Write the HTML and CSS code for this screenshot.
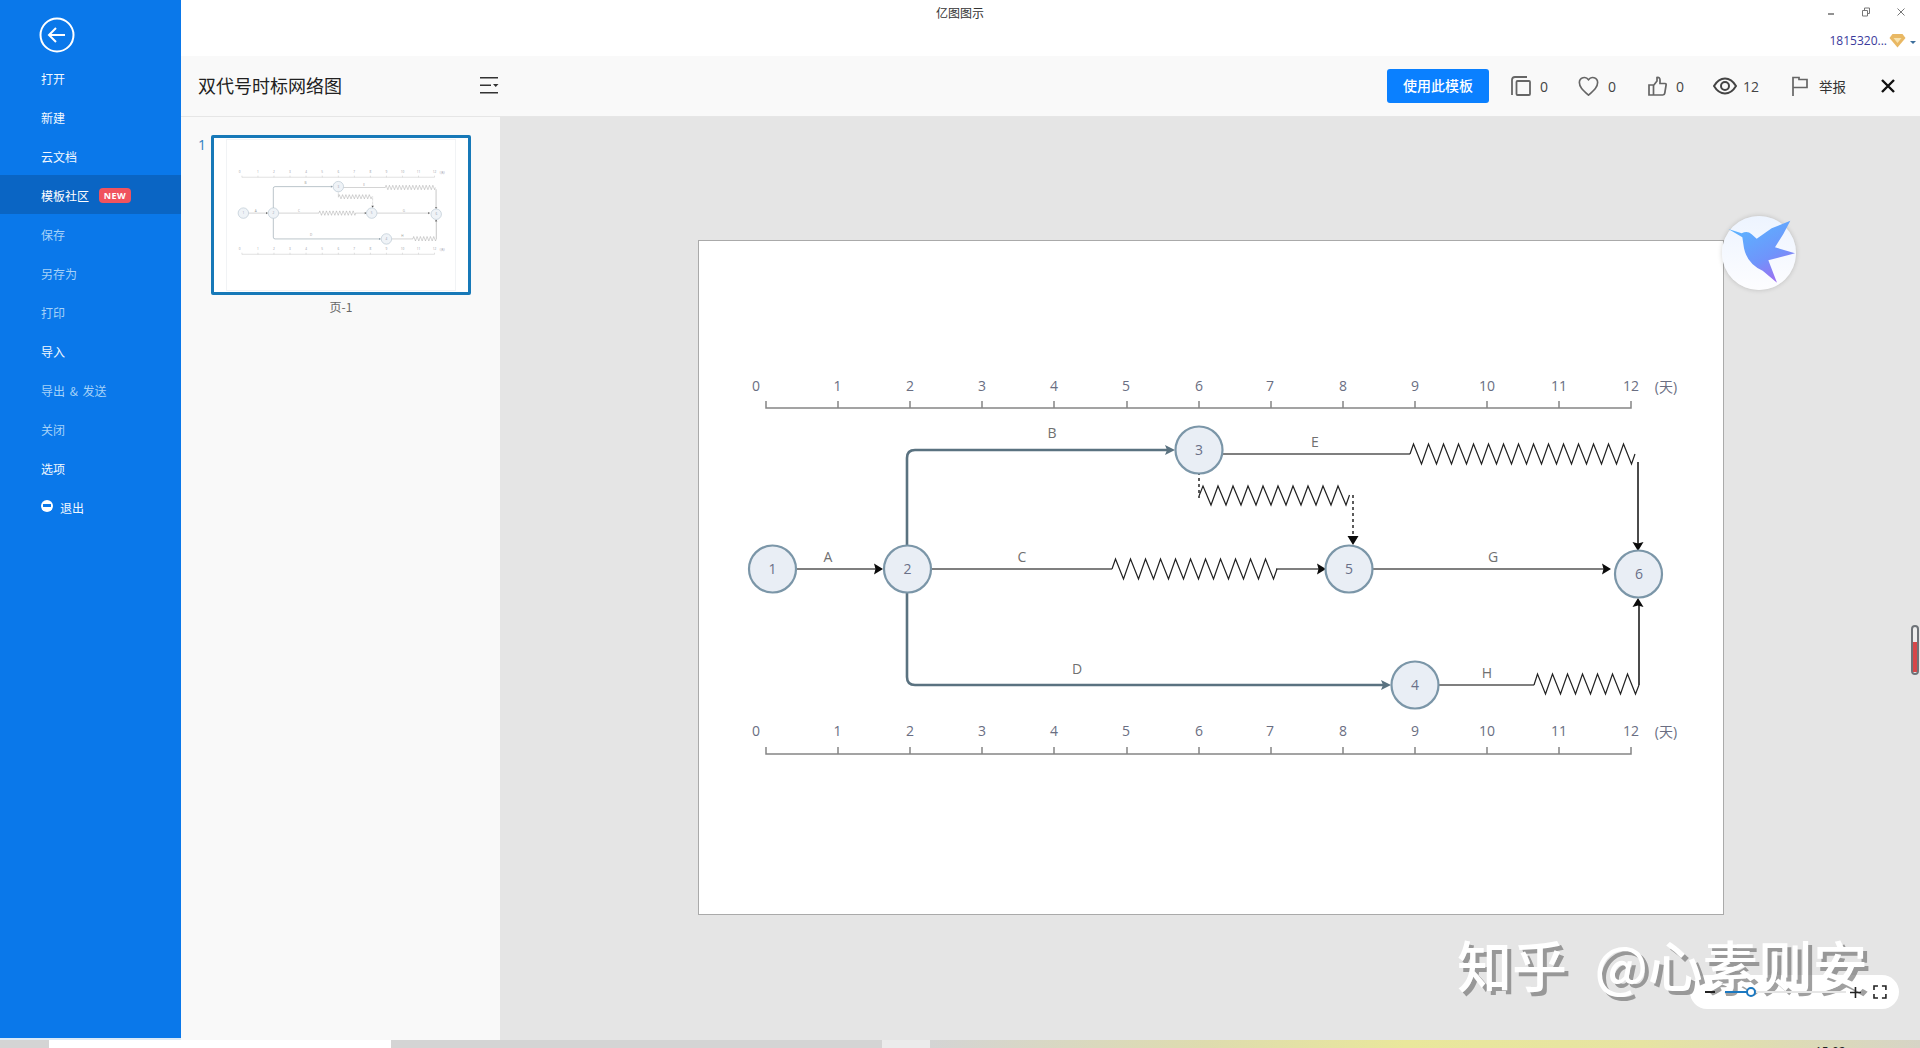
FILE: index.html
```html
<!DOCTYPE html>
<html lang="zh-CN">
<head>
    <meta charset="UTF-8">
    <title>亿图图示</title>
    <link rel="stylesheet" href="styles.css">
</head>
<body>
    <div class="app">
        <div class="main">
            <nav class="sidebar">
                <div class="back">
                    <svg width="36" height="36" viewBox="0 0 36 36" fill="none" stroke="#fff" stroke-width="2">
                        <circle cx="18" cy="18" r="16.5"/>
                        <path d="M26 18H10M17 11l-7 7 7 7"/>
                    </svg>
                </div>
                <a class="menu-item">打开</a>
                <a class="menu-item">新建</a>
                <a class="menu-item">云文档</a>
                <a class="menu-item active">模板社区<span class="badge">NEW</span></a>
                <a class="menu-item muted">保存</a>
                <a class="menu-item muted">另存为</a>
                <a class="menu-item muted">打印</a>
                <a class="menu-item">导入</a>
                <a class="menu-item muted">导出 &amp; 发送</a>
                <a class="menu-item muted">关闭</a>
                <a class="menu-item">选项</a>
                <a class="menu-item"><span class="exit-icon"></span>退出</a>
            </nav>

            <div class="content">
                <header class="titlebar">
                    <div class="app-title">亿图图示</div>
                    <div class="window-box">
                        <div class="window-controls">
                            <svg width="10" height="10" viewBox="0 0 10 10" stroke="#777" fill="none" stroke-width="1.6"><path d="M2 7h6"/></svg>
                            <svg width="10" height="10" viewBox="0 0 10 10" stroke="#777" fill="none"><path d="M1.5 3.5h5v5.5h-5zM3.5 3.5V1h5v5.5H6.500"/></svg>
                            <svg width="10" height="10" viewBox="0 0 10 10" stroke="#777" fill="none"><path d="M1.500 1.500l7 7M8.500 1.500l-7 7"/></svg>
                        </div>
                        <div class="user">
                            <span class="user-name">1815320...</span>
                            <svg width="17" height="15" viewBox="0 0 17 15">
                                <path d="M3.500 1h10l3 4-8 9.500L.5 5z" fill="#e9b863"/>
                                <path d="M4.500 5h8l-4 5z" fill="#f8e2ad"/>
                            </svg>
                            <span class="caret"></span>
                        </div>
                    </div>
                </header>

                <div class="toolbar">
                    <div class="doc-title">双代号时标网络图</div>
                    <svg class="list-icon" width="19" height="17" viewBox="0 0 19 17" fill="#333">
                        <path d="M0 0h18v1.600H0zM0 7.500h11v1.600H0zM0 15h18v1.600H0zM13 7h5.500l-2.750 3z"/>
                    </svg>
                    <div class="actions">
                        <button class="use-btn">使用此模板</button>
                        <div class="stat stat-copy">
                            <svg width="20" height="20" viewBox="0 0 20 20" fill="none" stroke="#666" stroke-width="1.800">
                                <path d="M1 19V4q0-3 3-3h12"/>
                                <rect x="5.500" y="5" width="13.500" height="14" rx="1"/>
                            </svg>
                            <span>0</span>
                        </div>
                        <div class="stat stat-heart">
                            <svg width="21" height="20" viewBox="0 0 24 23" fill="none" stroke="#666" stroke-width="1.900">
                                <path d="M12 22C5 16 1.500 12.500 1.500 7.500a5.800 5.800 0 0 1 10.500-3.300A5.800 5.800 0 0 1 22.500 7.500c0 5-3.500 8.500-10.500 14.500z"/>
                            </svg>
                            <span>0</span>
                        </div>
                        <div class="stat stat-thumb">
                            <svg width="19" height="20" viewBox="0 0 19 20" fill="none" stroke="#666" stroke-width="1.700">
                                <path d="M5.500 9v10H1V9zM5.500 9.500 9 5V1.500q3-.5 3 2.500v3.500h5q1.500 0 1 2l-1.200 7.500q-.3 2-2 2H5.500"/>
                            </svg>
                            <span>0</span>
                        </div>
                        <div class="stat stat-eye">
                            <svg width="24" height="18" viewBox="0 0 24 18" fill="none" stroke="#444" stroke-width="2">
                                <path d="M1 9C4 4 8 1.500 12 1.500S20 4 23 9c-3 5-7 7.500-11 7.500S4 14 1 9z"/>
                                <circle cx="12" cy="9" r="4"/>
                            </svg>
                            <span>12</span>
                        </div>
                        <div class="stat stat-flag">
                            <svg width="16" height="20" viewBox="0 0 16 20" fill="none" stroke="#666" stroke-width="1.700">
                                <path d="M1 20V1.500h6v2h8v8H1"/>
                            </svg>
                            <span class="stat-cn">举报</span>
                        </div>
                        <svg class="close-icon" width="14" height="14" viewBox="0 0 14 14" stroke="#111" stroke-width="2.400" fill="none">
                            <path d="M1 1l12 12M13 1 1 13"/>
                        </svg>
                    </div>
                </div>

                <div class="workspace">
                    <aside class="pages">
                        <div class="page-row">
                            <span class="page-num">1</span>
                            <div class="page-thumb">
                                <svg class="thumb-svg" viewBox="699 241 1024 673">
                                    <use href="#diagram"/>
                                </svg>
                            </div>
                        </div>
                        <div class="page-label">页-1</div>
                    </aside>

                    <section class="stage">
                        <div class="sheet">
                            <svg class="diagram" viewBox="699 241 1024 673">
                                <g id="diagram">
                                    <!-- time scales -->
                                    <path class="scale" d="M766 401V408H1631V401M838 401V408M910 401V408M982 401V408M1054 401V408M1127 401V408M1199 401V408M1271 401V408M1343 401V408M1415 401V408M1487 401V408M1559 401V408"/>
                                    <path class="scale" d="M766 747V754H1631V747M838 747V754M910 747V754M982 747V754M1054 747V754M1127 747V754M1199 747V754M1271 747V754M1343 747V754M1415 747V754M1487 747V754M1559 747V754"/>
                                    <g class="tick-text">
                                        <text x="756" y="391">0</text><text x="837.500" y="391">1</text><text x="910" y="391">2</text><text x="982" y="391">3</text><text x="1054" y="391">4</text><text x="1126" y="391">5</text><text x="1199" y="391">6</text><text x="1270" y="391">7</text><text x="1343" y="391">8</text><text x="1415" y="391">9</text><text x="1487" y="391">10</text><text x="1559" y="391">11</text><text x="1631" y="391">12</text><text x="1666" y="392">(天)</text>
                                        <text x="756" y="736">0</text><text x="837.500" y="736">1</text><text x="910" y="736">2</text><text x="982" y="736">3</text><text x="1054" y="736">4</text><text x="1126" y="736">5</text><text x="1199" y="736">6</text><text x="1270" y="736">7</text><text x="1343" y="736">8</text><text x="1415" y="736">9</text><text x="1487" y="736">10</text><text x="1559" y="736">11</text><text x="1631" y="736">12</text><text x="1666" y="737">(天)</text>
                                    </g>

                                    <!-- critical path edges -->
                                    <path class="edge-bold" d="M907 546V458Q907 450 915 450H1170"/>
                                    <path class="edge-bold" d="M907 592V677Q907 685 915 685H1386"/>
                                    <path class="head-slate" d="M1175 450l-10-5 2 5-2 5zM1391 685l-10-5 2 5-2 5z"/>

                                    <!-- plain edges -->
                                    <path class="edge" d="M796 569H878M931 569H1112M1276 569H1320M1373 569H1606M1222 454H1410M1439 685H1534"/>
                                    <path class="edge-dark" d="M1638 462V546M1639 685V603"/>
                                    <path class="edge-dash" d="M1199 472V498M1353 495V538"/>

                                    <!-- free float -->
                                    <polyline class="zig" points="1112,569 1115.500,559 1123.500,579 1130.500,559 1138.500,579 1145.500,559 1153.500,579 1160.500,559 1168.500,579 1175.500,559 1183.500,579 1190.500,559 1198.500,579 1205.500,559 1213.500,579 1220.500,559 1228.500,579 1235.500,559 1243.500,579 1250.500,559 1258.500,579 1265.500,559 1273.500,579 1277,569"/>
                                    <polyline class="zig" points="1410,454 1413.500,444 1421.500,464 1428.500,444 1436.500,464 1443.500,444 1451.500,464 1458.500,444 1466.500,464 1473.500,444 1481.500,464 1488.500,444 1496.500,464 1503.500,444 1511.500,464 1518.500,444 1526.500,464 1533.500,444 1541.500,464 1548.500,444 1556.500,464 1563.500,444 1571.500,464 1578.500,444 1586.500,464 1593.500,444 1601.500,464 1608.500,444 1616.500,464 1623.500,444 1631.500,464 1635,454"/>
                                    <polyline class="zig" points="1199,496 1203,486 1211,505 1218,486 1226,505 1233,486 1241,505 1248,486 1256,505 1263,486 1271,505 1278,486 1286,505 1293,486 1301,505 1308,486 1316,505 1323,486 1331,505 1338,486 1346,505 1349.500,495"/>
                                    <polyline class="zig" points="1534,685 1537.500,674 1545.500,694 1552.500,674 1560.500,694 1567.500,674 1575.500,694 1582.500,674 1590.500,694 1597.500,674 1605.500,694 1612.500,674 1620.500,694 1627.500,674 1635.500,694 1639,685"/>

                                    <!-- arrow heads -->
                                    <path class="head" d="M883 569l-9-5.500 1.500 5.500-1.500 5.500zM1326 569l-9-5.500 1.500 5.500-1.500 5.500zM1611 569l-9-5.500 1.500 5.500-1.500 5.500zM1353 545l-5.500-9h11zM1638 551l-5.500-9 5.500 1.500 5.500-1.500zM1638 598l-5.500 9 5.500-1.500 5.500 1.500z"/>

                                    <!-- nodes -->
                                    <g class="node">
                                        <circle cx="772.500" cy="569" r="23.500"/><circle cx="907.500" cy="569" r="23.500"/><circle cx="1199" cy="450" r="23.500"/><circle cx="1349" cy="569" r="23.500"/><circle cx="1638.500" cy="574" r="23.500"/><circle cx="1415" cy="685" r="23.500"/>
                                    </g>
                                    <g class="node-text">
                                        <text x="772.500" y="574">1</text><text x="907.500" y="574">2</text><text x="1199" y="455">3</text><text x="1349" y="574">5</text><text x="1639" y="579">6</text><text x="1415" y="690">4</text>
                                    </g>

                                    <!-- activity names -->
                                    <g class="edge-text">
                                        <text x="828" y="562">A</text><text x="1052" y="438">B</text><text x="1022" y="562">C</text><text x="1077" y="674">D</text><text x="1315" y="447">E</text><text x="1493" y="562">G</text><text x="1487" y="678">H</text>
                                    </g>
                                </g>
                            </svg>
                        </div>

                        <div class="bird">
                            <svg width="74" height="74" viewBox="66 48 222 222">
                                <defs>
                                    <linearGradient id="birdFill" x1="0.200" y1="0.100" x2="0.700" y2="1">
                                        <stop offset="0" stop-color="#5cb2ff"/>
                                        <stop offset="0.600" stop-color="#6f94fb"/>
                                        <stop offset="1" stop-color="#a06ef0"/>
                                    </linearGradient>
                                </defs>
                                <path fill="url(#birdFill)" d="M85 87 125 100Q142 90 155 103L170 116 215 85 271 62 250 102 225 142 285 160 205 181 231 248 188 212Q142 192 132 145L127 112Z"/>
                            </svg>
                        </div>

                        <div class="thermo"><span class="thermo-fill"></span></div>

                        <div class="zoom-pill">
                            <span class="zoom-minus"></span>
                            <div class="zoom-track"><span class="zoom-knob"></span></div>
                            <svg class="zoom-plus" width="11" height="11" viewBox="0 0 11 11" stroke="#222" stroke-width="1.600"><path d="M0 5.500h11M5.500 0v11"/></svg>
                            <svg class="zoom-full" width="14" height="14" viewBox="0 0 14 14" stroke="#222" stroke-width="1.600" fill="none">
                                <path d="M1 5V1h4M9 1h4v4M13 9v4H9M5 13H1V9"/>
                            </svg>
                        </div>

                        <div class="watermark">知乎 @心素则安</div>
                    </section>
                </div>
            </div>
        </div>

        <footer class="statusbar">
            <span class="seg-gray"></span>
            <span class="seg-white"></span>
            <span class="seg-mid"></span>
            <span class="seg-light"></span>
            <div class="seg-tray"><span class="clock">15:02</span></div>
        </footer>
    </div>
</body>
</html>
```

FILE: styles.css
```css
* {
    margin: 0;
    padding: 0;
    box-sizing: border-box;
}

body {
    width: 1920px;
    height: 1048px;
    overflow: hidden;
    background: #fff;
    color: #333;
    font-family: "Open Sans", "Noto Sans CJK SC", sans-serif;
    font-size: 12px;
}

.app {
    height: 100%;
    display: flex;
    flex-direction: column;
}

.main {
    flex: 1;
    min-height: 0;
    display: flex;
}

/* left menu */
.sidebar {
    width: 181px;
    flex-shrink: 0;
    background: #0a78ea;
    border-bottom: 2px solid #dbe9f7;
    font-family: "Noto Sans CJK SC", sans-serif;
}

.back {
    height: 58px;
    padding: 17px 0 0 39px;
}

.back svg {
    display: block;
}

.menu-item {
    height: 39px;
    padding: 2px 0 0 41px;
    display: flex;
    align-items: center;
    color: #f2f8ff;
    font-size: 12px;
    word-spacing: 2px;
}

.menu-item.active {
    background: #0a65c4;
    color: #fff;
}

.menu-item.muted {
    color: #a6d2f8;
}

.badge {
    margin-left: 10px;
    width: 32px;
    height: 15px;
    background: #f0535e;
    border-radius: 4px;
    color: #fff;
    font-family: "Open Sans", sans-serif;
    font-size: 9px;
    font-weight: 700;
    letter-spacing: 0.5px;
    line-height: 15px;
    text-align: center;
}

.exit-icon {
    width: 12px;
    height: 12px;
    margin: -4px 7px 0 0;
    display: flex;
    align-items: center;
    justify-content: center;
    border-radius: 50%;
    background: #fff;
}

.exit-icon::after {
    content: "";
    width: 8px;
    height: 3px;
    background: #0a78ea;
}

.content {
    flex: 1;
    min-width: 0;
    display: flex;
    flex-direction: column;
}

/* top strip */
.titlebar {
    height: 56px;
    flex-shrink: 0;
    display: flex;
    justify-content: space-between;
    padding: 5px 4px 0 755px;
    background: #fff;
}

.app-title {
    font-family: "Noto Sans CJK SC", sans-serif;
    font-size: 12px;
    line-height: 16px;
    color: #333;
}

.window-box {
    display: flex;
    flex-direction: column;
    align-items: flex-end;
}

.window-controls {
    display: flex;
    gap: 25px;
    margin: 2px 10px 0 0;
}

.window-controls svg {
    display: block;
}

.user {
    display: flex;
    align-items: center;
    margin: 16px 0 0 0;
}

.user-name {
    color: #3a3a9c;
    font-size: 12px;
    line-height: 16px;
}

.user svg {
    margin: -2px 0 0 2px;
}

.caret {
    margin: 2px 0 0 4px;
    border-left: 3px solid transparent;
    border-right: 3px solid transparent;
    border-top: 3px solid #3d6f9c;
}

/* document toolbar */
.toolbar {
    height: 61px;
    flex-shrink: 0;
    display: flex;
    align-items: center;
    padding: 0 25px 0 17px;
    background: #f9f9f9;
    border-bottom: 1px solid #e6e6e6;
}

.doc-title {
    width: 144px;
    margin-top: -2px;
    font-family: "Noto Sans CJK SC", sans-serif;
    font-size: 18px;
    color: #222;
}

.list-icon {
    margin: -2px 0 0 138px;
}

.actions {
    margin-left: auto;
    display: flex;
    align-items: center;
}

.use-btn {
    width: 102px;
    height: 34px;
    padding-bottom: 2px;
    border: none;
    border-radius: 3px;
    background: #0a80ff;
    color: #fff;
    font-family: "Noto Sans CJK SC", sans-serif;
    font-size: 14px;
    font-weight: 500;
}

.stat {
    display: flex;
    align-items: center;
    gap: 9px;
    font-size: 14px;
    color: #444;
}

.stat-copy { margin-left: 22px; }
.stat-heart { margin-left: 30px; }
.stat-thumb { margin-left: 32px; }
.stat-eye { margin-left: 29px; gap: 6px; }
.stat-flag { margin-left: 33px; gap: 11px; }

.stat-cn {
    font-family: "Noto Sans CJK SC", sans-serif;
    font-size: 13.500px;
    color: #333;
}

.close-icon {
    margin-left: 35px;
}

.workspace {
    flex: 1;
    min-height: 0;
    display: flex;
}

/* page list */
.pages {
    width: 319px;
    flex-shrink: 0;
    padding: 18px 0 0 17px;
    background: #f9f9f9;
}

.page-row {
    display: flex;
}

.page-num {
    width: 13px;
    color: #2f7fc1;
    font-size: 14px;
    line-height: 20px;
}

.page-thumb {
    width: 260px;
    height: 160px;
    padding: 1px 12px;
    background: #fff;
    border: 3px solid #1779b8;
    border-radius: 2px;
}

.thumb-svg {
    display: block;
    width: 100%;
    height: 100%;
    border: 1px solid #eceff1;
    opacity: 0.7;
}

.page-label {
    width: 260px;
    margin: 3px 0 0 13px;
    font-family: "Noto Sans CJK SC", sans-serif;
    font-size: 12px;
    line-height: 18px;
    text-align: center;
    color: #666;
}

/* canvas area */
.stage {
    position: relative;
    flex: 1;
    min-width: 0;
    padding: 123px 0 0 198px;
    background: #e5e5e5;
    overflow: hidden;
}

.sheet {
    width: 1026px;
    height: 675px;
    background: #fff;
    border: 1px solid #aaa;
}

.diagram {
    display: block;
    width: 1024px;
    height: 673px;
}

.scale {
    fill: none;
    stroke: #858585;
    stroke-width: 1.5;
}

.tick-text text,
.node-text text,
.edge-text text {
    font-family: "Open Sans", "Noto Sans CJK SC", sans-serif;
    font-size: 14px;
    text-anchor: middle;
}

.tick-text text { fill: #6a6e82; }
.node-text text { fill: #6a7088; }
.edge-text text { fill: #707070; }

.edge {
    fill: none;
    stroke: #555;
    stroke-width: 1.6;
}

.edge-dark {
    fill: none;
    stroke: #111;
    stroke-width: 1.5;
}

.edge-bold {
    fill: none;
    stroke: #5a7280;
    stroke-width: 2.6;
}

.edge-dash {
    fill: none;
    stroke: #333;
    stroke-width: 1.6;
    stroke-dasharray: 3 3;
}

.head-slate { fill: #5a7280; }
.head { fill: #0b0b0b; }

.zig {
    fill: none;
    stroke: #222;
    stroke-width: 1.2;
}

.node circle {
    fill: #e9eef5;
    stroke: #7b96a8;
    stroke-width: 2.2;
}

/* floating pieces over the stage */
.bird {
    position: absolute;
    left: 1222px;
    top: 99px;
    width: 74px;
    height: 74px;
    border-radius: 50%;
    background: linear-gradient(#edf4ff, #fdfdff);
    box-shadow: 0 0 5px rgba(0, 0, 0, 0.18);
}

.bird svg {
    display: block;
}

.thermo {
    position: absolute;
    left: 1411px;
    top: 508px;
    width: 8px;
    height: 50px;
    padding: 15px 0 1px;
    border: 2px solid #6e7378;
    border-radius: 4px;
    background: #eee;
}

.thermo-fill {
    display: block;
    height: 100%;
    background: #d6474a;
}

.zoom-pill {
    position: absolute;
    left: 1190px;
    top: 858px;
    width: 209px;
    height: 34px;
    display: flex;
    align-items: center;
    padding: 0 12px 0 15px;
    border-radius: 17px;
    background: #fff;
}

/* controls sit above the watermark, the pill itself below it */
.zoom-minus,
.zoom-track,
.zoom-plus,
.zoom-full {
    position: relative;
    z-index: 2;
}

.zoom-minus {
    width: 10px;
    height: 2px;
    background: #222;
}

.zoom-track {
    width: 122px;
    height: 2px;
    margin: 0 4px 0 10px;
    background: linear-gradient(to right, #1b78c0 24px, #e6e6e6 24px);
}

.zoom-knob {
    position: absolute;
    left: 21px;
    top: -4px;
    width: 10px;
    height: 10px;
    border: 2px solid #1b78c0;
    border-radius: 50%;
    background: #fff;
}

.zoom-full {
    margin-left: 12px;
}

.watermark {
    position: absolute;
    z-index: 1;
    left: 957px;
    top: 806px;
    font-family: "Noto Sans CJK SC", sans-serif;
    font-size: 55px;
    font-weight: 500;
    line-height: 80px;
    word-spacing: 15px;
    white-space: nowrap;
    color: #fff;
    text-shadow: 4px 4px 0 rgba(120, 120, 120, 0.7);
}

/* bottom strip */
.statusbar {
    height: 8px;
    flex-shrink: 0;
    display: flex;
    overflow: hidden;
    background: #d4d4d4;
}

.seg-gray { width: 49px; }
.seg-white { width: 342px; background: #fff; }
.seg-mid { width: 491px; }
.seg-light { width: 48px; background: #ebebeb; }

.seg-tray {
    flex: 1;
    padding: 4px 0 0 885px;
    background: linear-gradient(to right, #d4d4d4 0, #dedcae 28%, #e9e79b 48%, #e6e4a2 72%, #d6d4c6 100%);
}

.clock {
    display: block;
    font-size: 12px;
    line-height: 16px;
    color: #222;
}
```
